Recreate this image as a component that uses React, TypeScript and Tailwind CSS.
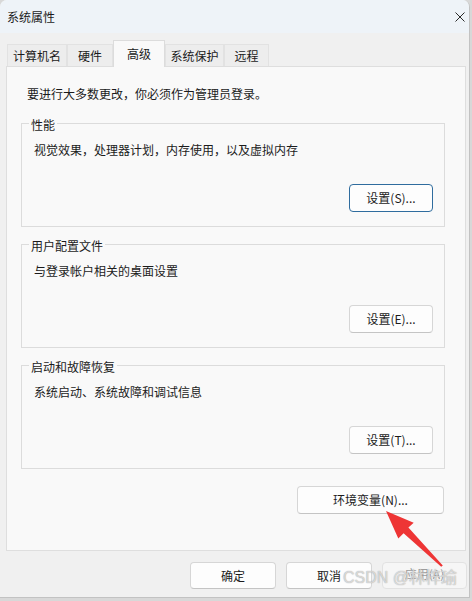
import React from 'react';

const tabs = [
  { label: '计算机名', w: 'w-[60px]' },
  { label: '硬件', w: 'w-[46px]' },
  { label: '高级', w: 'w-[52px]', active: true },
  { label: '系统保护', w: 'w-[59px]' },
  { label: '远程', w: 'w-[45px]' },
];

const groups = [
  { title: '性能', desc: '视觉效果，处理器计划，内存使用，以及虚拟内存', btn: '设置(S)...', focused: true },
  { title: '用户配置文件', desc: '与登录帐户相关的桌面设置', btn: '设置(E)...' },
  { title: '启动和故障恢复', desc: '系统启动、系统故障和调试信息', btn: '设置(T)...' },
];

function Button({ label, className = '', focused = false, disabled = false }: { label: string; className?: string; focused?: boolean; disabled?: boolean }) {
  const border = focused
    ? 'border-[1.5px] border-[#2f6c9e]'
    : disabled
      ? 'border border-[#e2e2e2]'
      : 'border border-[#d6d6d6] border-b-[#c4c4c4]';
  return (
    <div
      className={`flex items-center justify-center rounded-[4px] leading-[16px] ${border} ${disabled ? 'bg-[#f6f6f6] text-[#9c9c9c]' : 'bg-[#fdfdfd] text-[#1b1b1b]'} ${className}`}
    >
      {label}
    </div>
  );
}

export default function App() {
  return (
    <div className="relative w-[472px] h-[601px] bg-[#d8d8d8] font-['Noto_Sans_CJK_SC','Liberation_Sans',sans-serif] text-[12px] text-[#1b1b1b]">
      <div className="flex flex-col w-[470px] h-[598px] rounded-t-[7px] overflow-hidden border-r border-b border-[#c2c2c2] bg-[#f0f0f0]">
        {/* Title bar */}
        <div className="flex items-center justify-between h-[33px] shrink-0 pl-[7px] pr-[4px] bg-[#eef3f8]">
          <span className="leading-[16px]">系统属性</span>
          <svg width="10" height="10" viewBox="0 0 10 10">
            <path d="M0.5 0.5 L9.5 9.5 M9.5 0.5 L0.5 9.5" stroke="#2a2a2a" strokeWidth="1" fill="none" />
          </svg>
        </div>

        <div className="flex flex-col pl-[6px]">
          {/* Tabs */}
          <div className="flex items-end h-[26px] mt-[7px] pl-[1px]">
            {tabs.map((t) =>
              t.active ? (
                <div
                  key={t.label}
                  className={`relative z-10 flex items-start justify-center pt-[5px] h-[27px] -mb-[1px] ${t.w} bg-[#f9f9f9] border-t border-l border-r border-[#dcdcdc] leading-[16px]`}
                >
                  {t.label}
                </div>
              ) : (
                <div
                  key={t.label}
                  className={`flex items-center justify-center h-[22px] ${t.w} bg-[#ededed] border-t border-l border-r border-[#e2e2e2] leading-[16px]`}
                >
                  {t.label}
                </div>
              )
            )}
          </div>

          {/* Panel */}
          <div className="flex flex-col w-[460px] h-[485px] border border-[#dedede] bg-[#f9f9f9] pt-[19px] pl-[14px]">
            <p className="pl-[6px] leading-[16px]">要进行大多数更改，你必须作为管理员登录。</p>

            <div className="flex flex-col gap-[17px] mt-[21px]">
              {groups.map((g) => (
                <div key={g.title} className="flex flex-col w-[424px] h-[104px] border border-[#dcdcdc]">
                  <span className="-mt-[7px] ml-[7px] px-[2px] w-fit bg-[#f9f9f9] leading-[16px]">{g.title}</span>
                  <p className="mt-[9px] pl-[12px] leading-[16px]">{g.desc}</p>
                  <Button label={g.btn} focused={g.focused} className="self-end mt-[26px] mr-[11px] w-[84px] h-[28px]" />
                </div>
              ))}
            </div>

            <Button label="环境变量(N)..." className="self-start ml-[276px] mt-[17px] w-[147px] h-[28px]" />
          </div>

          {/* Dialog buttons */}
          <div className="flex justify-end gap-[10px] mt-[11px] pr-[2px]">
            <Button label="确定" className="w-[86px] h-[27px]" />
            <Button label="取消" className="w-[86px] h-[27px]" />
            <Button label="应用(A)" disabled className="w-[85px] h-[27px] items-start pt-[3px]" />
          </div>
        </div>
      </div>

      {/* Annotation arrow */}
      <svg className="absolute inset-0 pointer-events-none" width="472" height="601" viewBox="0 0 472 601">
        <polygon
          points="386,511 413.7,522.8 408.4,527.6 442.8,565.4 441.2,566.8 403.6,533.3 398.3,538.4"
          fill="#ee3535"
        />
      </svg>

      {/* Watermark */}
      <span className="absolute left-[343px] top-[568px] text-[16px] leading-[20px] text-white/60 font-['Liberation_Sans','Noto_Sans_CJK_SC',sans-serif] [text-shadow:0_0_1px_#8a8a8a]">
        CSDN @林梓瑜
      </span>
    </div>
  );
}
